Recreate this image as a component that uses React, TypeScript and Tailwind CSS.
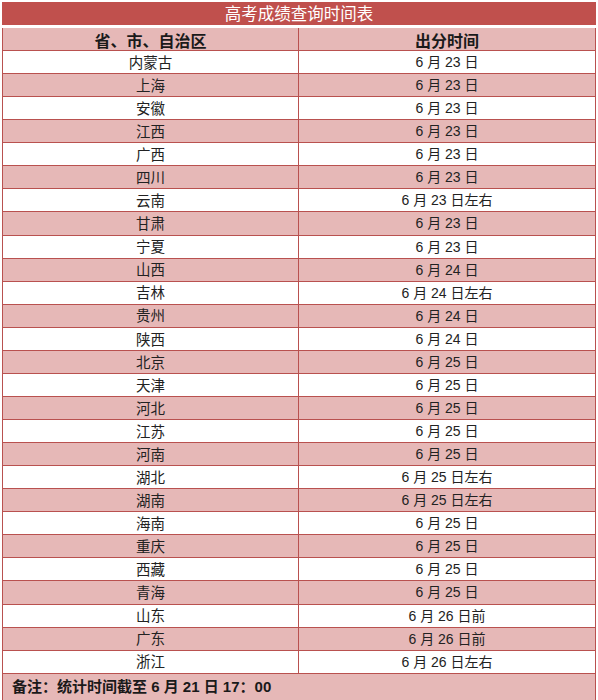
const rows: [string, string][] = [
  ["内蒙古", "6 月 23 日"],
  ["上海", "6 月 23 日"],
  ["安徽", "6 月 23 日"],
  ["江西", "6 月 23 日"],
  ["广西", "6 月 23 日"],
  ["四川", "6 月 23 日"],
  ["云南", "6 月 23 日左右"],
  ["甘肃", "6 月 23 日"],
  ["宁夏", "6 月 23 日"],
  ["山西", "6 月 24 日"],
  ["吉林", "6 月 24 日左右"],
  ["贵州", "6 月 24 日"],
  ["陕西", "6 月 24 日"],
  ["北京", "6 月 25 日"],
  ["天津", "6 月 25 日"],
  ["河北", "6 月 25 日"],
  ["江苏", "6 月 25 日"],
  ["河南", "6 月 25 日"],
  ["湖北", "6 月 25 日左右"],
  ["湖南", "6 月 25 日左右"],
  ["海南", "6 月 25 日"],
  ["重庆", "6 月 25 日"],
  ["西藏", "6 月 25 日"],
  ["青海", "6 月 25 日"],
  ["山东", "6 月 26 日前"],
  ["广东", "6 月 26 日前"],
  ["浙江", "6 月 26 日左右"],
];

const cjk = "font-['Noto_Sans_CJK_SC',sans-serif]";
const mixed = "font-['Liberation_Sans','Noto_Sans_CJK_SC',sans-serif]";

export default function App() {
  return (
    <div className="h-[700px] w-[598px] overflow-hidden bg-white pt-[2px] pl-[2px] pr-[2px]">
      <div
        className={`flex h-[23px] items-center justify-center bg-[#c0504d] text-[16.5px] leading-none text-white ${cjk}`}
      >
        高考成绩查询时间表
      </div>

      <div className="mt-[3px] w-[594px] border-x border-[#b9514f]">
        <div className="grid h-[23px] grid-cols-[296px_1fr] border-b border-[#b9514f] bg-[#e6b8b7] text-[16px] font-bold text-[#1a1a1a]">
          <div className={`flex items-center justify-center border-r border-[#b9514f] ${cjk}`}>
            省、市、自治区
          </div>
          <div className={`flex items-center justify-center ${cjk}`}>出分时间</div>
        </div>

        {rows.map(([name, date], i) => (
          <div
            key={name}
            className={`grid h-[23.07px] grid-cols-[296px_1fr] border-b border-[#b9514f] leading-none text-[#222] ${
              i % 2 === 0 ? "bg-white" : "bg-[#e6b8b7]"
            }`}
          >
            <div className={`flex items-center justify-center border-r border-[#b9514f] text-[14.5px] ${cjk}`}>
              {name}
            </div>
            <div className={`flex items-center justify-center text-[14px] ${mixed}`}>{date}</div>
          </div>
        ))}

        <div
          className={`flex h-[30px] items-center bg-[#e6b8b7] pl-[9px] pb-[3px] text-[15px] font-bold text-[#1a1a1a] ${mixed}`}
        >
          备注：统计时间截至 6 月 21 日 17：00
        </div>
      </div>
    </div>
  );
}
